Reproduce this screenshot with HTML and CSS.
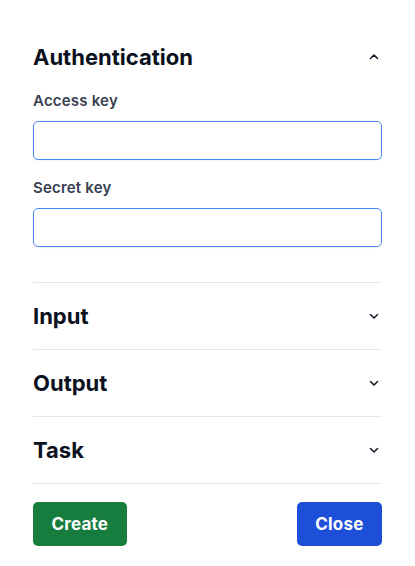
FILE: index.html
```html
<!DOCTYPE html>
<html>
<head>
<meta charset="utf-8">
<link rel="stylesheet" href="styles.css">
</head>
<body>
<div class="panel">
  <section class="section open">
    <div class="section-head">
      <h2 class="section-title">Authentication</h2>
      <svg class="chev" width="12" height="12" viewBox="0 0 12 12"><path d="M2.5 7.5 L6 4 L9.5 7.5" fill="none" stroke="#111827" stroke-width="1.5" stroke-linecap="round" stroke-linejoin="round"/></svg>
    </div>
    <div class="section-body">
      <label class="field-label">Access key</label>
      <input class="field-input" type="text">
      <label class="field-label second">Secret key</label>
      <input class="field-input" type="text">
    </div>
  </section>
  <section class="section">
    <div class="section-head">
      <h2 class="section-title">Input</h2>
      <svg class="chev" width="12" height="12" viewBox="0 0 12 12"><path d="M2.5 4.5 L6 8 L9.5 4.5" fill="none" stroke="#111827" stroke-width="1.5" stroke-linecap="round" stroke-linejoin="round"/></svg>
    </div>
  </section>
  <section class="section">
    <div class="section-head">
      <h2 class="section-title">Output</h2>
      <svg class="chev" width="12" height="12" viewBox="0 0 12 12"><path d="M2.5 4.5 L6 8 L9.5 4.5" fill="none" stroke="#111827" stroke-width="1.5" stroke-linecap="round" stroke-linejoin="round"/></svg>
    </div>
  </section>
  <section class="section">
    <div class="section-head">
      <h2 class="section-title">Task</h2>
      <svg class="chev" width="12" height="12" viewBox="0 0 12 12"><path d="M2.5 4.5 L6 8 L9.5 4.5" fill="none" stroke="#111827" stroke-width="1.5" stroke-linecap="round" stroke-linejoin="round"/></svg>
    </div>
  </section>
  <div class="actions">
    <button class="btn btn-create">Create</button>
    <button class="btn btn-close">Close</button>
  </div>
</div>
</body>
</html>
```

FILE: styles.css
```css
* { box-sizing: border-box; }
html, body { margin: 0; background: #fff; }
body { font-family: Inter, "Noto Sans", sans-serif; color: #111827; }
.panel { padding: 24px 33px 0 33px; }
.section { border-bottom: 1px solid #e5e7eb; }
.section-head {
  display: flex;
  align-items: center;
  justify-content: space-between;
  padding: 19px 2px 19px 0;
}
.section-title {
  margin: 0;
  font-size: 22px;
  line-height: 28px;
  font-weight: 700;
  color: #0b1120;
}
.chev { display: block; }
.section-body {
  display: flex;
  flex-direction: column;
  padding: 1px 0 35px 0;
}
.field-label {
  font-size: 15px;
  line-height: 20px;
  font-weight: 600;
  letter-spacing: 0.2px;
  color: #374151;
  margin-bottom: 10px;
}
.field-label.second { margin-top: 18px; }
.field-input {
  height: 39px;
  width: 100%;
  border: 1px solid #4a88f5;
  border-radius: 5px;
  box-shadow: 0 1px 2px rgba(0,0,0,0.06);
  outline: none;
  background: #fff;
}
.actions {
  display: flex;
  justify-content: space-between;
  padding-top: 18px;
}
.btn {
  height: 44px;
  border: none;
  border-radius: 5px;
  font-family: Inter, "Noto Sans", sans-serif;
  font-size: 17px;
  font-weight: 700;
  letter-spacing: 0.2px;
  color: #fff;
  padding: 0 18.5px;
}
.btn-create { background: #177d3e; }
.btn-close { background: #1e4fd8; }
```
